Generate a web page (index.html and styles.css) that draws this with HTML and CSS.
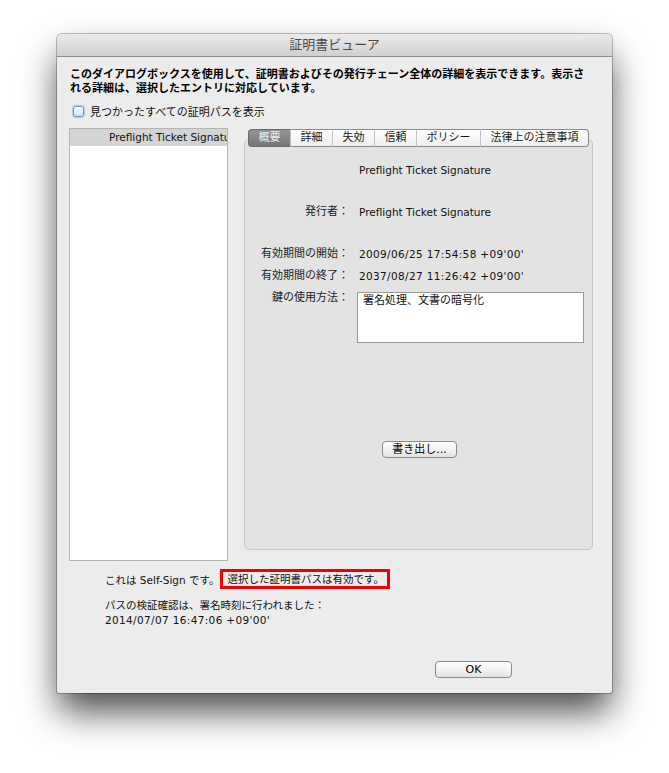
FILE: index.html
```html
<!DOCTYPE html>
<html lang="ja">
  <head>
    <meta charset="UTF-8" />
    <meta name="viewport" content="width=device-width, initial-scale=1.0" />
    <title>証明書ビューア</title>
    <link rel="stylesheet" href="styles.css">
  </head>
  <body>
    <div class="window">
      <div class="titlebar">証明書ビューア</div>

      <div class="content">
        <p class="intro">
          このダイアログボックスを使用して、証明書およびその発行チェーン全体の詳細を表示できます。表示さ<br />れる詳細は、選択したエントリに対応しています。
        </p>

        <label class="check">
          <span class="check-box"></span>
          見つかったすべての証明パスを表示
        </label>

        <div class="main">
          <div class="cert-list">
            <div class="cert-item">Preflight Ticket Signature</div>
          </div>

          <div class="tabview">
            <div class="tabs">
              <span class="tab selected">概要</span>
              <span class="tab">詳細</span>
              <span class="tab">失効</span>
              <span class="tab">信頼</span>
              <span class="tab">ポリシー</span>
              <span class="tab">法律上の注意事項</span>
            </div>

            <div class="panel">
              <div class="field subject">
                <span class="field-label"></span>
                <span class="field-value">Preflight Ticket Signature</span>
              </div>
              <div class="field gap">
                <span class="field-label">発行者：</span>
                <span class="field-value">Preflight Ticket Signature</span>
              </div>
              <div class="field gap">
                <span class="field-label">有効期間の開始：</span>
                <span class="field-value date">2009/06/25 17:54:58 +09'00'</span>
              </div>
              <div class="field">
                <span class="field-label">有効期間の終了：</span>
                <span class="field-value date">2037/08/27 11:26:42 +09'00'</span>
              </div>
              <div class="field">
                <span class="field-label">鍵の使用方法：</span>
                <div class="usage-box">署名処理、文書の暗号化</div>
              </div>

              <div class="export">
                <button type="button" class="btn btn-export">書き出し...</button>
              </div>
            </div>
          </div>
        </div>

        <div class="status">
          <span>これは Self-Sign です。</span>
          <span class="highlight">選択した証明書パスは有効です。</span>
        </div>
        <p class="verify">
          パスの検証確認は、署名時刻に行われました：<br /><span class="date">2014/07/07 16:47:06 +09'00'</span>
        </p>

        <div class="footer">
          <button type="button" class="btn btn-ok">OK</button>
        </div>
      </div>
    </div>
  </body>
</html>
```

FILE: styles.css
```css
body {
  margin: 0;
  background-color: #fff;
  font-family: "DejaVu Sans", "Noto Sans CJK JP", sans-serif;
  font-size: 11px;
  color: #111;
}
.window {
  width: 555px;
  height: 659px;
  margin: 34px 0 80px 57px;
  background-color: #ececec;
  border-radius: 5px 5px 2px 2px;
  box-shadow: 0 0 0 1px rgba(0, 0, 0, 0.25), 0 20px 36px -2px rgba(0, 0, 0, 0.72);
  overflow: hidden;
}
.titlebar {
  height: 22px;
  line-height: 22px;
  text-align: center;
  font-size: 13px;
  color: #4a4a4a;
  background: linear-gradient(#ebebeb, #d0d0d0);
  border-bottom: 1px solid #8c8c8c;
}
.content {
  padding: 0 12px;
}
.intro {
  margin: 11px 0 0;
  padding-left: 1px;
  line-height: 14px;
  font-weight: 600;
  color: #000;
}
.check {
  display: flex;
  align-items: center;
  height: 14px;
  margin: 8px 0 0 4px;
}
.check-box {
  width: 9px;
  height: 9px;
  margin-right: 6px;
  border: 1px solid #6f95c8;
  border-radius: 3px;
  background: linear-gradient(#ffffff, #cfe0f3);
  box-shadow: 0 0 1px 1px rgba(120, 160, 215, 0.5);
}
.main {
  display: flex;
  align-items: flex-start;
  margin-top: 10px;
}
.cert-list {
  width: 157px;
  height: 431px;
  background-color: #fff;
  border: 1px solid #b5b5b5;
  overflow: hidden;
}
.cert-item {
  height: 17px;
  line-height: 17px;
  padding-left: 39px;
  font-size: 10.5px;
  white-space: nowrap;
  background-color: #d4d4d4;
}
.tabview {
  width: 349px;
  margin: 1px 0 0 16px;
}
.tabs {
  position: relative;
  z-index: 1;
  display: flex;
  justify-content: center;
  margin-bottom: -8px;
}
.tab {
  height: 16px;
  line-height: 16px;
  padding: 0 9.5px;
  color: #1a1a1a;
  background: linear-gradient(#ffffff, #ededed);
  border: 1px solid #8a8a8a;
  border-left: 1px solid #c2c2c2;
  border-right: none;
}
.tab:first-child {
  border-left: 1px solid #8a8a8a;
  border-radius: 4px 0 0 4px;
}
.tab:last-child {
  border-right: 1px solid #8a8a8a;
  border-radius: 0 4px 4px 0;
}
.tab.selected {
  color: #eeeeee;
  background: linear-gradient(#959595, #767676);
  border-color: #6a6a6a;
}
.panel {
  height: 390px;
  padding-top: 19px;
  background-color: #e3e3e3;
  border: 1px solid #c8c8c8;
  border-radius: 5px;
}
.field {
  display: flex;
  align-items: flex-start;
  line-height: 22px;
}
.field.gap {
  margin-top: 20px;
}
.field-label {
  width: 104px;
  flex-shrink: 0;
  text-align: right;
  color: #222;
}
.field-value {
  margin-left: 10px;
  font-size: 10.5px;
  white-space: nowrap;
}
.date {
  letter-spacing: 0.35px;
}
.usage-box {
  width: 220px;
  height: 48px;
  margin: 5px 0 0 8px;
  padding: 1px 0 0 5px;
  line-height: 14px;
  background-color: #fff;
  border: 1px solid #9a9a9a;
}
.export {
  display: flex;
  justify-content: center;
  margin-top: 98px;
}
.btn {
  height: 17px;
  padding: 0;
  font-family: inherit;
  font-size: 11px;
  line-height: 15px;
  color: #000;
  background: linear-gradient(#ffffff, #f2f2f2 50%, #e2e2e2);
  border: 1px solid #8b8b8b;
  border-radius: 4px;
}
.btn-export {
  width: 75px;
  margin-left: 2px;
}
.status {
  display: flex;
  align-items: center;
  height: 20px;
  margin: 8px 0 0 36px;
  font-size: 10.5px;
}
.highlight {
  margin-left: 1px;
  padding: 0 3px 0 4px;
  line-height: 14px;
  border: 3px solid #f00000;
}
.verify {
  margin: 9px 0 0 36px;
  line-height: 15px;
  font-size: 10.5px;
}
.footer {
  display: flex;
  justify-content: flex-end;
  margin: 33px 88px 0 0;
}
.btn-ok {
  width: 77px;
}
```
